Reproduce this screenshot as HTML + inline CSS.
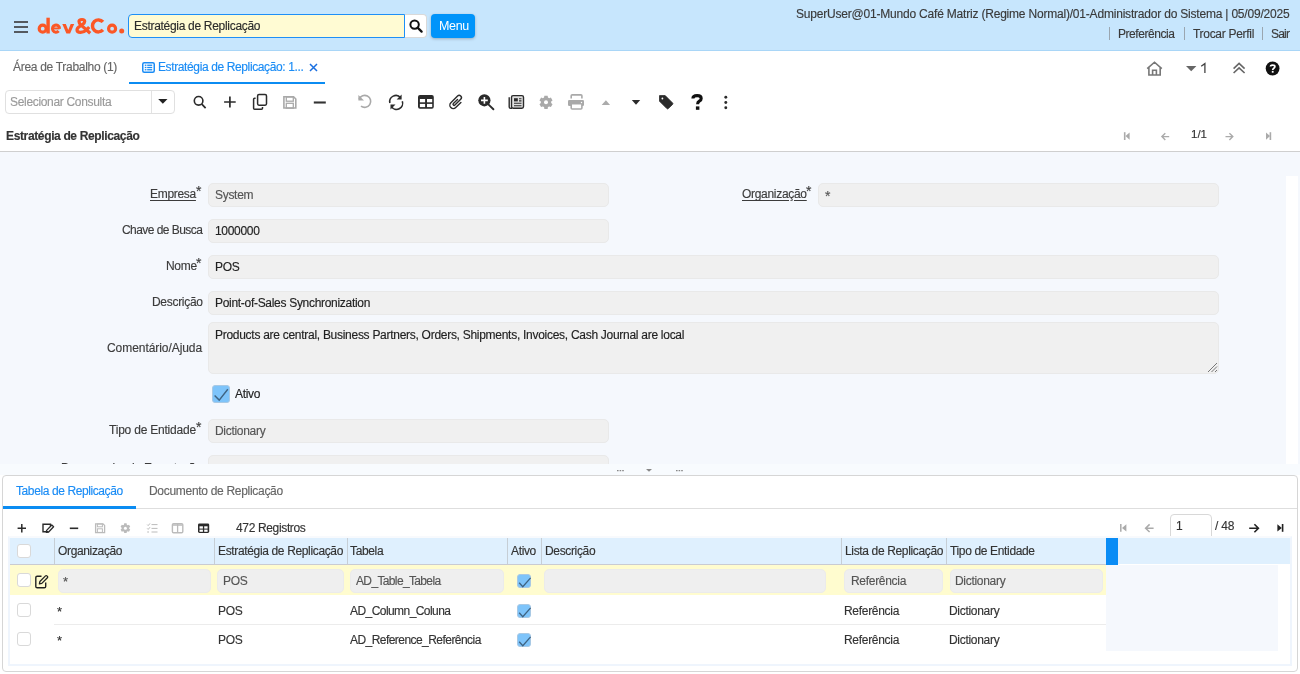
<!DOCTYPE html><html><head><meta charset="utf-8"><style>
html,body{margin:0;padding:0;}
body{width:1300px;height:674px;overflow:hidden;position:relative;background:#fff;font-family:"Liberation Sans",sans-serif;}
.t{position:absolute;white-space:nowrap;will-change:transform;-webkit-text-stroke:0.15px currentColor;}
.r{position:absolute;}
</style></head><body>
<div class="r" style="left:0px;top:0px;width:1300px;height:50px;background:#c7e6fd;"></div>
<div class="r" style="left:0px;top:50px;width:1300px;height:1px;background:#a9d6f7;"></div>
<div class="r" style="left:14px;top:21px;width:14px;height:2px;background:#555a60;"></div>
<div class="r" style="left:14px;top:26px;width:14px;height:2px;background:#555a60;"></div>
<div class="r" style="left:14px;top:31px;width:14px;height:2px;background:#555a60;"></div>
<svg class="r" style="left:36px;top:16px" width="92" height="20" viewBox="36 16 92 20"><circle cx="42.7" cy="28.7" r="3.5" fill="none" stroke="#fb5726" stroke-width="3.2"/><rect x="46.4" y="17.7" width="3.4" height="15.8" fill="#fb5726"/><path d="M59.55 28.65 A3.55 3.55 0 1 0 58.64 31.03" fill="none" stroke="#fb5726" stroke-width="3.0"/><path d="M52.6 28.45 H59.6" stroke="#fb5726" stroke-width="1.9"/><path d="M62.3 24 H65.8 L68.25 30 L70.7 24 H74.2 L70.1 33.5 H66.4 Z" fill="#fb5726"/><path d="M90.2 33.2 L80.6 24.6 Q79 23.2 79 21.6 Q79 19.5 82 19.5 Q84.7 19.5 84.7 21.6 Q84.7 23.3 82.2 24.8 L80.4 25.9 Q77 27.8 77 30 Q77 32.3 80.6 32.3 Q84 32.3 86.6 29.8 L89.2 27" fill="none" stroke="#fb5726" stroke-width="3.2" stroke-linejoin="round"/><path d="M102.96 21.89 A6 6 0 1 0 102.96 29.91" fill="none" stroke="#fb5726" stroke-width="3.45"/><circle cx="112.1" cy="28.7" r="3.5" fill="none" stroke="#fb5726" stroke-width="3.2"/><circle cx="121.7" cy="31" r="2.5" fill="#fb5726"/></svg>
<div class="r" style="left:128px;top:14px;width:277px;height:24px;background:#fffbd3;border:1px solid #1e8ff7;border-radius:4px 0 0 4px;box-sizing:border-box;"></div>
<div class="t" style="left:134px;top:20.34px;font-size:12px;line-height:12px;color:#2b2b2b;font-weight:400;letter-spacing:-0.3px;">Estratégia de Replicação</div>
<div class="r" style="left:405px;top:14px;width:22px;height:24px;background:#fff;border:1px solid #d9d9d9;border-left:none;border-radius:0 4px 4px 0;box-sizing:border-box;"></div>
<svg class="r" style="left:409px;top:19px" width="14" height="14" viewBox="0 0 14 14"><circle cx="5.6" cy="5.6" r="4.2" fill="none" stroke="#111" stroke-width="2"/><path d="M8.6 8.6 L12.6 12.6" stroke="#111" stroke-width="2.2" stroke-linecap="round"/></svg>
<div class="r" style="left:431px;top:14px;width:44px;height:24px;background:#0094fa;border-radius:4px;box-shadow:0 1px 3px rgba(0,0,0,0.25);"></div>
<div class="t" style="left:439.2px;top:19.92px;font-size:12.5px;line-height:12.5px;color:#fff;font-weight:400;letter-spacing:-0.35px;-webkit-text-stroke:0;">Menu</div>
<div class="t" style="right:10.8px;top:8.34px;font-size:12px;line-height:12px;color:#3a3a3a;font-weight:400;letter-spacing:-0.2px;">SuperUser@01-Mundo Café Matriz (Regime Normal)/01-Administrador do Sistema | 05/09/2025</div>
<div class="r" style="left:1109.0px;top:27px;width:1.0px;height:13px;background:#9aa6b0;"></div>
<div class="r" style="left:1184.0px;top:27px;width:1.0px;height:13px;background:#9aa6b0;"></div>
<div class="r" style="left:1261.5px;top:27px;width:1.0px;height:13px;background:#9aa6b0;"></div>
<div class="t" style="left:1118.3px;top:28.34px;font-size:12px;line-height:12px;color:#3a3a3a;font-weight:400;letter-spacing:-0.45px;">Preferência</div>
<div class="t" style="left:1193px;top:28.34px;font-size:12px;line-height:12px;color:#3a3a3a;font-weight:400;letter-spacing:-0.3px;">Trocar Perfil</div>
<div class="t" style="left:1271.2px;top:28.34px;font-size:12px;line-height:12px;color:#3a3a3a;font-weight:400;letter-spacing:-0.8px;">Sair</div>
<div class="t" style="left:13px;top:60.84px;font-size:12px;line-height:12px;color:#666;font-weight:400;letter-spacing:-0.3px;">Área de Trabalho (1)</div>
<svg class="r" style="left:142px;top:61.5px" width="13" height="11" viewBox="0 0 13 11"><rect x="0.75" y="0.75" width="11.5" height="9.5" rx="1.5" fill="none" stroke="#1a8cf5" stroke-width="1.5"/><rect x="2.8" y="2.6" width="1.6" height="1.3" fill="#1a8cf5"/><rect x="5.2" y="2.6" width="5" height="1.3" fill="#1a8cf5"/><rect x="2.8" y="4.85" width="1.6" height="1.3" fill="#1a8cf5"/><rect x="5.2" y="4.85" width="5" height="1.3" fill="#1a8cf5"/><rect x="2.8" y="7.1" width="1.6" height="1.3" fill="#1a8cf5"/><rect x="5.2" y="7.1" width="5" height="1.3" fill="#1a8cf5"/></svg>
<div class="t" style="left:158px;top:60.84px;font-size:12px;line-height:12px;color:#1a8cf5;font-weight:400;letter-spacing:-0.38px;">Estratégia de Replicação: 1...</div>
<svg class="r" style="left:309px;top:62.5px" width="9" height="9" viewBox="0 0 9 9"><path d="M1 1L8 8M8 1L1 8" stroke="#1a6fe0" stroke-width="1.5"/></svg>
<div class="r" style="left:129px;top:82px;width:196px;height:2px;background:#0b8cf2;"></div>
<svg class="r" style="left:1145px;top:60px" width="19" height="17" viewBox="1145 60 19 17"><path d="M1147.2 68.6 L1154.5 62.2 L1161.8 68.6 M1148.9 67.4 V75 H1160.2 V67.4 M1152.6 75 V70.2 H1156.4 V75" fill="none" stroke="#777" stroke-width="1.6" stroke-linejoin="miter"/></svg>
<svg class="r" style="left:1185px;top:65px" width="12" height="7" viewBox="1185 65 12 7"><path d="M1186 66 H1196.4 L1191.2 71.2 Z" fill="#666"/></svg>
<svg class="r" style="left:1199px;top:62px" width="9" height="13" viewBox="1199 62 9 13"><path d="M1201.2 66.2 L1204.9 63.6 V73.1" fill="none" stroke="#444" stroke-width="1.3"/></svg>
<svg class="r" style="left:1232px;top:61px" width="15" height="14" viewBox="1232 61 15 14"><path d="M1233.6 68.6 L1239.1 63.4 L1244.6 68.6 M1233.6 73 L1239.1 67.8 L1244.6 73" fill="none" stroke="#666" stroke-width="1.6"/></svg>
<svg class="r" style="left:1265px;top:61px" width="15" height="15" viewBox="1265 61 15 15"><circle cx="1272.6" cy="68.5" r="6.9" fill="#111"/><path d="M1270.4 66.6 C1270.4 64.7 1274.9 64.6 1274.9 66.7 C1274.9 68.2 1272.7 68.2 1272.7 69.9" fill="none" stroke="#fff" stroke-width="1.7"/><rect x="1271.8" y="70.9" width="1.8" height="1.8" fill="#fff"/></svg>
<div class="r" style="left:4.5px;top:90px;width:170.3px;height:24px;border:1px solid #e0e0e0;border-radius:4px;box-sizing:border-box;background:#fff;"></div>
<div class="r" style="left:151px;top:91px;width:1px;height:22px;background:#e2e2e2;"></div>
<div class="t" style="left:10.3px;top:96.04px;font-size:12px;line-height:12px;color:#9a9a9a;font-weight:400;letter-spacing:-0.32px;">Selecionar Consulta</div>
<svg class="r" style="left:157px;top:98px" width="12" height="7" viewBox="157 98 12 7"><path d="M158.2 99 H167.5 L162.85 103.8 Z" fill="#222"/></svg>
<svg class="r" style="left:0;top:88px" width="740" height="26" viewBox="0 88 740 26"><circle cx="198.6" cy="100.8" r="4.3" fill="none" stroke="#2b2b2b" stroke-width="1.6"/><path d="M201.8 104.2 L205.6 108.2" stroke="#2b2b2b" stroke-width="1.7"/><path d="M224.1 102 H235.7 M229.9 96.5 V107.6" stroke="#2b2b2b" stroke-width="1.7"/><rect x="257.6" y="94.6" width="8.9" height="10.6" rx="1.4" fill="none" stroke="#2b2b2b" stroke-width="1.5"/><path d="M255.6 98.2 H254.6 Q253.6 98.2 253.6 99.2 V108.3 Q253.6 109.3 254.6 109.3 H261.5 Q262.5 109.3 262.5 108.3 V107" fill="none" stroke="#2b2b2b" stroke-width="1.5"/><path d="M283.9 96.8 H293.6 L295.8 99 V108 H283.9 Z" fill="none" stroke="#a9a9a9" stroke-width="1.6"/><rect x="286.3" y="97" width="7" height="4.2" fill="none" stroke="#a9a9a9" stroke-width="1.3"/><rect x="286.3" y="103.3" width="7" height="4.8" fill="none" stroke="#a9a9a9" stroke-width="1.3"/><path d="M313.8 102.5 H325.8" stroke="#333" stroke-width="2.1"/><path d="M359.1 99.2 A6 6 0 1 1 361 106.1" fill="none" stroke="#a9a9a9" stroke-width="1.6"/><path d="M358.4 95 V100.6 H364 Z" fill="#a9a9a9"/><path d="M389.9 103 A6.1 6.1 0 0 1 400.6 97.8" fill="none" stroke="#2b2b2b" stroke-width="1.6"/><path d="M401.6 94.6 V99.6 H396.6 Z" fill="#2b2b2b"/><path d="M402.3 101.3 A6.1 6.1 0 0 1 391.4 106.6" fill="none" stroke="#2b2b2b" stroke-width="1.6"/><path d="M390.5 109.6 V104.6 H395.5 Z" fill="#2b2b2b"/><rect x="418" y="95" width="15.8" height="13.7" rx="2" fill="#2b2b2b"/><rect x="419.9" y="99" width="5.2" height="3.3" fill="#fff"/><rect x="427" y="99" width="5.2" height="3.3" fill="#fff"/><rect x="419.9" y="103.9" width="5.2" height="3.2" fill="#fff"/><rect x="427" y="103.9" width="5.2" height="3.2" fill="#fff"/><g transform="translate(456.3 102.2) rotate(45) scale(1.18)"><path d="M2.9 -2.6 V3.6 A2.9 2.9 0 0 1 -2.9 3.6 V-4.4 A1.9 1.9 0 0 1 0.9 -4.4 V2.6 A0.9 0.9 0 0 1 -0.9 2.6 V-2.4" fill="none" stroke="#2b2b2b" stroke-width="1.2" stroke-linecap="round"/></g><circle cx="484.4" cy="100.3" r="6.1" fill="#2b2b2b"/><path d="M481 100.4 H487.8 M484.4 97 V103.8" stroke="#fff" stroke-width="1.6"/><path d="M488.6 104.6 L493.4 109.3" stroke="#2b2b2b" stroke-width="1.9" stroke-linecap="round"/><rect x="511.5" y="95.6" width="12" height="12.6" rx="1.6" fill="#e0e0e0" stroke="#2b2b2b" stroke-width="1.4"/><path d="M509.2 97.3 V107 Q509.2 108.2 510.6 108.2 H512" fill="none" stroke="#2b2b2b" stroke-width="1.4"/><rect x="514" y="98.2" width="3.8" height="3.2" fill="#2b2b2b"/><path d="M519 98.7 H521.5 M519 100.9 H521.5 M514 103.3 H521.5 M514 105.7 H521.5" stroke="#2b2b2b" stroke-width="1.1"/><path d="M544.35 95.70 L547.65 95.70 L547.95 97.48 L549.20 98.20 L550.89 97.58 L552.54 100.43 L551.15 101.58 L551.15 103.02 L552.54 104.17 L550.89 107.02 L549.20 106.40 L547.95 107.12 L547.65 108.90 L544.35 108.90 L544.05 107.12 L542.80 106.40 L541.11 107.02 L539.46 104.17 L540.85 103.02 L540.85 101.58 L539.46 100.43 L541.11 97.58 L542.80 98.20 L544.05 97.48 Z" fill="#a9a9a9"/><circle cx="546" cy="102.3" r="2" fill="#fff"/><path d="M571.2 98.4 V95.8 Q571.2 94.9 572.2 94.9 H580.9 Q581.9 94.9 581.9 95.8 V98.4" fill="none" stroke="#a9a9a9" stroke-width="1.6"/><rect x="568" y="100" width="16" height="6" rx="1.3" fill="#a9a9a9"/><rect x="571.2" y="103.6" width="10.7" height="5.4" rx="1" fill="#fff" stroke="#a9a9a9" stroke-width="1.6"/><circle cx="581.5" cy="102.5" r="0.7" fill="#fff"/><path d="M601.7 104.9 L605.9 100.3 L610.1 104.9 Z" fill="#ababab"/><path d="M631.8 99.9 H640.2 L636 104.7 Z" fill="#2b2b2b"/><path d="M659.5 95.6 H665.2 L672.6 103 Q673.3 103.7 672.6 104.4 L668.3 108.6 Q667.6 109.3 666.9 108.6 L659.5 101.2 Z" fill="#2b2b2b" stroke="#2b2b2b" stroke-width="0.8" stroke-linejoin="round"/><circle cx="662.4" cy="98.5" r="0.9" fill="#fff"/><path d="M692.9 98.6 Q692.9 95.6 697.1 95.6 Q701.2 95.6 701.2 98.4 Q701.2 100.2 699.3 101.2 Q697.6 102.1 697.6 104.3" fill="none" stroke="#111" stroke-width="3.1"/><rect x="695.9" y="106.4" width="3.5" height="3.4" fill="#111"/><circle cx="725.8" cy="97.3" r="1.45" fill="#2b2b2b"/><circle cx="725.8" cy="102.5" r="1.45" fill="#2b2b2b"/><circle cx="725.8" cy="107.7" r="1.45" fill="#2b2b2b"/></svg>
<div class="t" style="left:5.5px;top:130.04px;font-size:12px;line-height:12px;color:#333;font-weight:700;letter-spacing:-0.36px;">Estratégia de Replicação</div>
<svg class="r" style="left:1110px;top:125px" width="180" height="22" viewBox="1110 125 180 22"><path d="M1124.7 132.2 V140" stroke="#aaa" stroke-width="1.6"/><path d="M1129.6 132.4 V139.8 L1125.5 136.1 Z" fill="#aaa"/><path d="M1169.2 136.6 H1162 M1165.3 133.2 L1161.9 136.6 L1165.3 140" fill="none" stroke="#aaa" stroke-width="1.4"/><path d="M1225.5 136.6 H1232.7 M1229.4 133.2 L1232.8 136.6 L1229.4 140" fill="none" stroke="#aaa" stroke-width="1.4"/><path d="M1270.4 132.2 V140" stroke="#aaa" stroke-width="1.6"/><path d="M1266 132.4 V139.8 L1270 136.1 Z" fill="#aaa"/></svg>
<div class="t" style="left:1190.8px;top:129.07px;font-size:11.5px;line-height:11.5px;color:#333;font-weight:400;letter-spacing:0px;">1/1</div>
<div class="r" style="left:0px;top:151px;width:1300px;height:1px;background:#cfcfcf;"></div>
<div class="r" style="left:0px;top:152px;width:1300px;height:312px;background:#f5f8fd;overflow:hidden;"></div>
<div class="r" style="left:1286px;top:176px;width:12px;height:288px;background:#fff;"></div>
<div class="t" style="right:1103.7px;top:187.84px;font-size:12px;line-height:12px;color:#3c3c3c;font-weight:400;letter-spacing:-0.3px;text-decoration:underline;text-underline-offset:2px;">Empresa</div>
<div class="t" style="left:196.4px;top:183.95px;font-size:14px;line-height:14px;color:#3c3c3c;font-weight:400;letter-spacing:0px;">*</div>
<div class="r" style="left:208px;top:183px;width:401px;height:24px;background:#f0f0f0;border:1px solid #e9e9e9;border-radius:5px;box-sizing:border-box;"></div>
<div class="t" style="left:214.5px;top:189.14px;font-size:12px;line-height:12px;color:#555;font-weight:400;letter-spacing:-0.3px;">System</div>
<div class="t" style="right:493.7px;top:187.84px;font-size:12px;line-height:12px;color:#3c3c3c;font-weight:400;letter-spacing:-0.3px;text-decoration:underline;text-underline-offset:2px;">Organização</div>
<div class="t" style="left:806.4px;top:183.95px;font-size:14px;line-height:14px;color:#3c3c3c;font-weight:400;letter-spacing:0px;">*</div>
<div class="r" style="left:818px;top:183px;width:401px;height:24px;background:#f0f0f0;border:1px solid #e9e9e9;border-radius:5px;box-sizing:border-box;"></div>
<div class="t" style="left:824.5px;top:189.15px;font-size:14px;line-height:14px;color:#555;font-weight:400;letter-spacing:0px;">*</div>
<div class="t" style="right:1097.45px;top:223.84px;font-size:12px;line-height:12px;color:#3c3c3c;font-weight:400;letter-spacing:-0.55px;">Chave de Busca</div>
<div class="r" style="left:208px;top:219px;width:401px;height:24px;background:#f0f0f0;border:1px solid #e9e9e9;border-radius:5px;box-sizing:border-box;"></div>
<div class="t" style="left:214.5px;top:225.14px;font-size:12px;line-height:12px;color:#222;font-weight:400;letter-spacing:-0.3px;">1000000</div>
<div class="t" style="right:1103.7px;top:259.84px;font-size:12px;line-height:12px;color:#3c3c3c;font-weight:400;letter-spacing:-0.3px;">Nome</div>
<div class="t" style="left:196.4px;top:255.95px;font-size:14px;line-height:14px;color:#3c3c3c;font-weight:400;letter-spacing:0px;">*</div>
<div class="r" style="left:208px;top:255px;width:1011px;height:24px;background:#f0f0f0;border:1px solid #e9e9e9;border-radius:5px;box-sizing:border-box;"></div>
<div class="t" style="left:214.5px;top:261.14px;font-size:12px;line-height:12px;color:#222;font-weight:400;letter-spacing:-0.3px;">POS</div>
<div class="t" style="right:1097.7px;top:295.84px;font-size:12px;line-height:12px;color:#3c3c3c;font-weight:400;letter-spacing:-0.3px;">Descrição</div>
<div class="r" style="left:208px;top:291px;width:1011px;height:24px;background:#f0f0f0;border:1px solid #e9e9e9;border-radius:5px;box-sizing:border-box;"></div>
<div class="t" style="left:214.5px;top:297.14px;font-size:12px;line-height:12px;color:#222;font-weight:400;letter-spacing:-0.3px;">Point-of-Sales Synchronization</div>
<div class="t" style="right:1097.94px;top:341.84px;font-size:12px;line-height:12px;color:#3c3c3c;font-weight:400;letter-spacing:-0.06px;">Comentário/Ajuda</div>
<div class="r" style="left:208px;top:322px;width:1011px;height:52px;background:#f0f0f0;border:1px solid #e9e9e9;border-radius:5px;box-sizing:border-box;"></div>
<div class="t" style="left:214.5px;top:328.64px;font-size:12px;line-height:12px;color:#222;font-weight:400;letter-spacing:-0.28px;">Products are central, Business Partners, Orders, Shipments, Invoices, Cash Journal are local</div>
<svg class="r" style="left:1205px;top:360px" width="13" height="13" viewBox="0 0 13 13"><path d="M12 3 L3 12 M12 6.5 L6.5 12 M12 10 L10 12" stroke="#777" stroke-width="1"/></svg>
<div class="r" style="left:212.3px;top:385.2px;width:17.399999999999977px;height:17.400000000000034px;background:#7ec4fa;border:1px solid #a9c9e4;border-radius:3px;box-sizing:border-box;"></div>
<svg class="r" style="left:213px;top:386px;overflow:visible" width="17" height="17" viewBox="0 0 17 17"><path d="M1.6 9.4 L6.2 14.1 L14.8 3.3" fill="none" stroke="#3f6483" stroke-width="1.4"/></svg>
<div class="t" style="left:234.6px;top:388.04px;font-size:12px;line-height:12px;color:#222;font-weight:400;letter-spacing:-0.3px;">Ativo</div>
<div class="t" style="right:1103.79px;top:423.84px;font-size:12px;line-height:12px;color:#3c3c3c;font-weight:400;letter-spacing:-0.21px;">Tipo de Entidade</div>
<div class="t" style="left:196.4px;top:419.95px;font-size:14px;line-height:14px;color:#3c3c3c;font-weight:400;letter-spacing:0px;">*</div>
<div class="r" style="left:208px;top:419px;width:401px;height:24px;background:#f0f0f0;border:1px solid #e9e9e9;border-radius:5px;box-sizing:border-box;"></div>
<div class="t" style="left:214.5px;top:425.14px;font-size:12px;line-height:12px;color:#555;font-weight:400;letter-spacing:-0.3px;">Dictionary</div>
<div class="r" style="left:0;top:452px;width:1300px;height:12px;overflow:hidden;"><div class="r" style="left:208px;top:3px;width:401px;height:24px;background:#f0f0f0;border:1px solid #e9e9e9;border-radius:5px;box-sizing:border-box;"></div><div class="t" style="right:1098px;top:10px;font-size:12px;line-height:12px;color:#3c3c3c;letter-spacing:-0.3px;">Processador de Exportação</div></div>
<div class="r" style="left:0px;top:464px;width:1300px;height:11px;background:#f8fbfe;"></div>
<svg class="r" style="left:600px;top:464px" width="100" height="11" viewBox="600 464 100 11"><path d="M617 470.6 H618.6 M619.6 470.6 H621.2 M622.2 470.6 H623.8" stroke="#888" stroke-width="1.2"/><path d="M646 469 H652 L649 471.8 Z" fill="#888"/><path d="M676 470.6 H677.6 M678.6 470.6 H680.2 M681.2 470.6 H682.8" stroke="#888" stroke-width="1.2"/></svg>
<div class="r" style="left:2px;top:475px;width:1296px;height:197px;background:#fff;border:1px solid #d6d6d6;border-radius:4px;box-sizing:border-box;"></div>
<div class="r" style="left:3px;top:508px;width:1294px;height:1px;background:#dedede;"></div>
<div class="t" style="left:16.3px;top:484.84px;font-size:12px;line-height:12px;color:#1a8cf5;font-weight:400;letter-spacing:-0.4px;">Tabela de Replicação</div>
<div class="r" style="left:3px;top:506px;width:133px;height:2.5px;background:#0b8cf2;"></div>
<div class="t" style="left:149.2px;top:484.84px;font-size:12px;line-height:12px;color:#666;font-weight:400;letter-spacing:-0.3px;">Documento de Replicação</div>
<svg class="r" style="left:0;top:515px" width="230" height="25" viewBox="0 515 230 25"><path d="M17.6 528.2 H26 M21.8 524 V532.4" stroke="#2b2b2b" stroke-width="1.5"/><path d="M48.5 531.8 H43 V524.2 H50.5 V526" fill="none" stroke="#2b2b2b" stroke-width="1.4"/><path d="M46.6 530.4 L51.8 525 L53.6 526.8 L48.4 532.2 L46.4 532.4 Z" fill="none" stroke="#2b2b2b" stroke-width="1.3" stroke-linejoin="round"/><path d="M69.8 528.3 H78.2" stroke="#2b2b2b" stroke-width="1.6"/><path d="M95.6 523.8 H103 L104.6 525.4 V532.6 H95.6 Z" fill="none" stroke="#bbb" stroke-width="1.3"/><rect x="97.4" y="524" width="5" height="2.8" fill="none" stroke="#bbb" stroke-width="1"/><rect x="97.4" y="528.8" width="5" height="3.6" fill="none" stroke="#bbb" stroke-width="1"/><path d="M124.19 523.35 L126.61 523.35 L126.82 524.68 L127.74 525.21 L129.00 524.73 L130.21 526.82 L129.16 527.67 L129.16 528.73 L130.21 529.58 L129.00 531.67 L127.74 531.19 L126.82 531.72 L126.61 533.05 L124.19 533.05 L123.98 531.72 L123.06 531.19 L121.80 531.67 L120.59 529.58 L121.64 528.73 L121.64 527.67 L120.59 526.82 L121.80 524.73 L123.06 525.21 L123.98 524.68 Z" fill="#bbb"/><circle cx="125.4" cy="528.2" r="1.5" fill="#fff"/><path d="M147.2 524.6 L148.2 525.6 L150 523.4 M147.2 528.4 L148.2 529.4 L150 527.2 M147.2 532 H149 M151.5 524.6 H157.5 M151.5 528.4 H157.5 M151.5 532 H157.5" fill="none" stroke="#bbb" stroke-width="1"/><rect x="172.4" y="523.6" width="10.4" height="9.2" rx="1.2" fill="none" stroke="#bbb" stroke-width="1.4"/><path d="M172.6 525 H182.6 M177.6 524 V532.5" stroke="#bbb" stroke-width="1.3"/><rect x="198" y="523.4" width="11.2" height="9.6" rx="1.4" fill="#2b2b2b"/><rect x="199.5" y="526.3" width="3.4" height="2.3" fill="#fff"/><rect x="204.2" y="526.3" width="3.4" height="2.3" fill="#fff"/><rect x="199.5" y="529.6" width="3.4" height="2.2" fill="#fff"/><rect x="204.2" y="529.6" width="3.4" height="2.2" fill="#fff"/></svg>
<div class="t" style="left:236px;top:522.14px;font-size:12px;line-height:12px;color:#333;font-weight:400;letter-spacing:-0.35px;">472 Registros</div>
<svg class="r" style="left:1110px;top:515px" width="185" height="22" viewBox="1110 515 185 22"><path d="M1120.8 524 V531.8" stroke="#aaa" stroke-width="1.5"/><path d="M1126.4 524.2 V531.6 L1122 527.9 Z" fill="#aaa"/><path d="M1153.6 528.2 H1145.8 M1149.6 524.4 L1145.6 528.2 L1149.6 532" fill="none" stroke="#aaa" stroke-width="1.5"/><path d="M1249.2 528.2 H1258 M1254.4 524.2 L1258.4 528.2 L1254.4 532.2" fill="none" stroke="#222" stroke-width="1.6"/><path d="M1282.6 524 V531.8" stroke="#222" stroke-width="1.6"/><path d="M1277.4 524.2 V531.6 L1281.8 527.9 Z" fill="#222"/></svg>
<div class="r" style="left:1170px;top:514px;width:42px;height:26px;border:1px solid #d8d8d8;border-radius:4px;box-sizing:border-box;background:#fff;"></div>
<div class="t" style="left:1176px;top:520.34px;font-size:12px;line-height:12px;color:#333;font-weight:400;letter-spacing:0px;">1</div>
<div class="t" style="left:1214.6px;top:520.34px;font-size:12px;line-height:12px;color:#333;font-weight:400;letter-spacing:-0.2px;">/ 48</div>
<div class="r" style="left:8px;top:536px;width:1283.5px;height:129.5px;background:#fff;border:2px solid #eff5fd;border-top-color:#f8fafd;box-sizing:border-box;"></div>
<div class="r" style="left:10px;top:538px;width:1280px;height:26px;background:#dff0fe;"></div>
<div class="r" style="left:10px;top:563.7px;width:1096px;height:1.5px;background:#c9cbd2;"></div>
<div class="r" style="left:54.0px;top:538px;width:1.0px;height:26px;background:#c6ced5;"></div>
<div class="r" style="left:214.0px;top:538px;width:1.0px;height:26px;background:#c6ced5;"></div>
<div class="r" style="left:347.0px;top:538px;width:1.0px;height:26px;background:#c6ced5;"></div>
<div class="r" style="left:507.0px;top:538px;width:1.0px;height:26px;background:#c6ced5;"></div>
<div class="r" style="left:541.0px;top:538px;width:1.0px;height:26px;background:#c6ced5;"></div>
<div class="r" style="left:841.0px;top:538px;width:1.0px;height:26px;background:#c6ced5;"></div>
<div class="r" style="left:946.0px;top:538px;width:1.0px;height:26px;background:#c6ced5;"></div>
<div class="r" style="left:1106px;top:538px;width:12px;height:27px;background:#0a8cf5;"></div>
<div class="r" style="left:17.1px;top:543.6px;width:14.0px;height:14.0px;background:#fff;border:1px solid #d9d9d9;border-radius:3px;box-sizing:border-box;"></div>
<div class="t" style="left:58.3px;top:545.04px;font-size:12px;line-height:12px;color:#333;font-weight:400;letter-spacing:-0.35px;">Organização</div>
<div class="t" style="left:218px;top:545.04px;font-size:12px;line-height:12px;color:#333;font-weight:400;letter-spacing:-0.35px;">Estratégia de Replicação</div>
<div class="t" style="left:350px;top:545.04px;font-size:12px;line-height:12px;color:#333;font-weight:400;letter-spacing:-0.35px;">Tabela</div>
<div class="t" style="left:511px;top:545.04px;font-size:12px;line-height:12px;color:#333;font-weight:400;letter-spacing:-0.35px;">Ativo</div>
<div class="t" style="left:545px;top:545.04px;font-size:12px;line-height:12px;color:#333;font-weight:400;letter-spacing:-0.35px;">Descrição</div>
<div class="t" style="left:845px;top:545.04px;font-size:12px;line-height:12px;color:#333;font-weight:400;letter-spacing:-0.35px;">Lista de Replicação</div>
<div class="t" style="left:950px;top:545.04px;font-size:12px;line-height:12px;color:#333;font-weight:400;letter-spacing:-0.35px;">Tipo de Entidade</div>
<div class="r" style="left:10px;top:565.2px;width:1096px;height:29.799999999999955px;background:#fffccf;"></div>
<div class="r" style="left:17.1px;top:573.1px;width:14.0px;height:14.0px;background:#fff;border:1px solid #d9d9d9;border-radius:3px;box-sizing:border-box;"></div>
<svg class="r" style="left:34px;top:574px" width="16" height="16" viewBox="34 574 16 16"><path d="M41.5 576.2 H37.2 Q35.8 576.2 35.8 577.6 V586.4 Q35.8 587.8 37.2 587.8 H44.3 Q45.7 587.8 45.7 586.4 V582.4" fill="none" stroke="#222" stroke-width="1.4"/><path d="M39.4 583.8 L39.9 581.5 L45.5 575.9 Q46.2 575.2 46.9 575.9 L47.4 576.4 Q48.1 577.1 47.4 577.8 L41.8 583.4 Z" fill="none" stroke="#222" stroke-width="1.3" stroke-linejoin="round"/></svg>
<div class="r" style="left:57.5px;top:569px;width:153.5px;height:24px;background:#efefef;border:1px solid #ebebeb;border-radius:5px;box-sizing:border-box;"></div>
<div class="r" style="left:217px;top:569px;width:127px;height:24px;background:#efefef;border:1px solid #ebebeb;border-radius:5px;box-sizing:border-box;"></div>
<div class="r" style="left:350.4px;top:569px;width:153.60000000000002px;height:24px;background:#efefef;border:1px solid #ebebeb;border-radius:5px;box-sizing:border-box;"></div>
<div class="r" style="left:544.3px;top:569px;width:281.70000000000005px;height:24px;background:#efefef;border:1px solid #ebebeb;border-radius:5px;box-sizing:border-box;"></div>
<div class="r" style="left:844.3px;top:569px;width:98.70000000000005px;height:24px;background:#efefef;border:1px solid #ebebeb;border-radius:5px;box-sizing:border-box;"></div>
<div class="r" style="left:949.5px;top:569px;width:153.5px;height:24px;background:#efefef;border:1px solid #ebebeb;border-radius:5px;box-sizing:border-box;"></div>
<div class="t" style="left:62.8px;top:574.50px;font-size:13px;line-height:13px;color:#555;font-weight:400;letter-spacing:0px;">*</div>
<div class="t" style="left:223.3px;top:575.14px;font-size:12px;line-height:12px;color:#555;font-weight:400;letter-spacing:-0.3px;">POS</div>
<div class="t" style="left:356.3px;top:575.14px;font-size:12px;line-height:12px;color:#555;font-weight:400;letter-spacing:-0.64px;">AD_Table_Tabela</div>
<div class="r" style="left:517px;top:574.3px;width:14px;height:14.0px;background:#7ec4fa;border:1px solid #a9c9e4;border-radius:3px;box-sizing:border-box;"></div>
<svg class="r" style="left:517px;top:574.3px;overflow:visible" width="14" height="14" viewBox="0 0 14 14"><path d="M2.2 8.8 L5.8 12.7 L13.6 3.9" fill="none" stroke="#3f6483" stroke-width="1.3"/></svg>
<div class="t" style="left:850.5px;top:575.14px;font-size:12px;line-height:12px;color:#555;font-weight:400;letter-spacing:-0.3px;">Referência</div>
<div class="t" style="left:955px;top:575.14px;font-size:12px;line-height:12px;color:#555;font-weight:400;letter-spacing:-0.3px;">Dictionary</div>
<div class="r" style="left:54px;top:624px;width:1052px;height:1px;background:#ececec;"></div>
<div class="r" style="left:1106px;top:565px;width:172px;height:86px;background:#f5f8fd;"></div>
<div class="r" style="left:17.1px;top:602.9px;width:14.0px;height:14.0px;background:#fff;border:1px solid #d9d9d9;border-radius:3px;box-sizing:border-box;"></div>
<div class="t" style="left:57px;top:604.60px;font-size:13px;line-height:13px;color:#333;font-weight:400;letter-spacing:0px;">*</div>
<div class="t" style="left:217.5px;top:605.04px;font-size:12px;line-height:12px;color:#333;font-weight:400;letter-spacing:-0.3px;">POS</div>
<div class="t" style="left:350px;top:605.04px;font-size:12px;line-height:12px;color:#333;font-weight:400;letter-spacing:-0.56px;">AD_Column_Coluna</div>
<div class="r" style="left:517px;top:604.0999999999999px;width:14px;height:14.0px;background:#7ec4fa;border:1px solid #a9c9e4;border-radius:3px;box-sizing:border-box;"></div>
<svg class="r" style="left:517px;top:604.0999999999999px;overflow:visible" width="14" height="14" viewBox="0 0 14 14"><path d="M2.2 8.8 L5.8 12.7 L13.6 3.9" fill="none" stroke="#3f6483" stroke-width="1.3"/></svg>
<div class="t" style="left:844px;top:605.04px;font-size:12px;line-height:12px;color:#333;font-weight:400;letter-spacing:-0.3px;">Referência</div>
<div class="t" style="left:949px;top:605.04px;font-size:12px;line-height:12px;color:#333;font-weight:400;letter-spacing:-0.3px;">Dictionary</div>
<div class="r" style="left:17.1px;top:631.6px;width:14.0px;height:14.0px;background:#fff;border:1px solid #d9d9d9;border-radius:3px;box-sizing:border-box;"></div>
<div class="t" style="left:57px;top:633.80px;font-size:13px;line-height:13px;color:#333;font-weight:400;letter-spacing:0px;">*</div>
<div class="t" style="left:217.5px;top:634.24px;font-size:12px;line-height:12px;color:#333;font-weight:400;letter-spacing:-0.3px;">POS</div>
<div class="t" style="left:350px;top:634.24px;font-size:12px;line-height:12px;color:#333;font-weight:400;letter-spacing:-0.55px;">AD_Reference_Referência</div>
<div class="r" style="left:517px;top:632.8px;width:14px;height:14.0px;background:#7ec4fa;border:1px solid #a9c9e4;border-radius:3px;box-sizing:border-box;"></div>
<svg class="r" style="left:517px;top:632.8px;overflow:visible" width="14" height="14" viewBox="0 0 14 14"><path d="M2.2 8.8 L5.8 12.7 L13.6 3.9" fill="none" stroke="#3f6483" stroke-width="1.3"/></svg>
<div class="t" style="left:844px;top:634.24px;font-size:12px;line-height:12px;color:#333;font-weight:400;letter-spacing:-0.3px;">Referência</div>
<div class="t" style="left:949px;top:634.24px;font-size:12px;line-height:12px;color:#333;font-weight:400;letter-spacing:-0.3px;">Dictionary</div>
</body></html>
